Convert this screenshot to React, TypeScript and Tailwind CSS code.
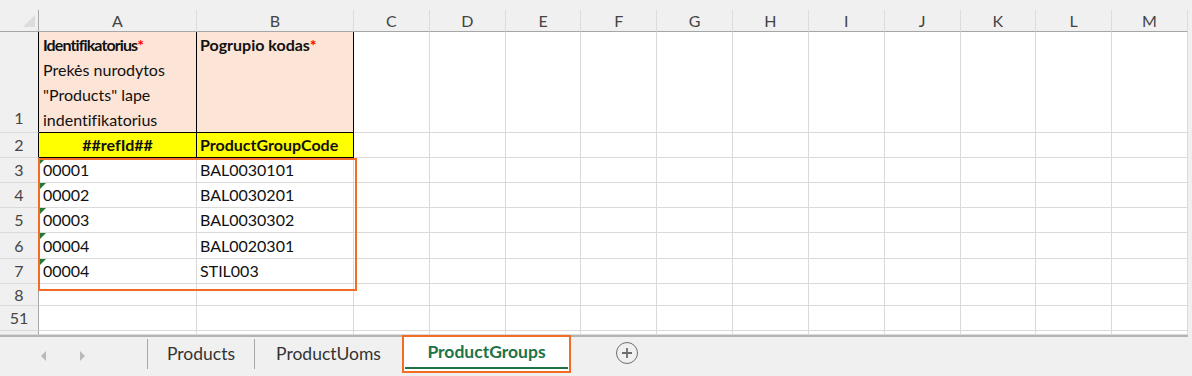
import React from 'react';

const cols = ['A', 'B', 'C', 'D', 'E', 'F', 'G', 'H', 'I', 'J', 'K', 'L', 'M'];
const extraCols = cols.slice(2);

const dataRows = [
  { n: '3', id: '00001', code: 'BAL0030101' },
  { n: '4', id: '00002', code: 'BAL0030201' },
  { n: '5', id: '00003', code: 'BAL0030302' },
  { n: '6', id: '00004', code: 'BAL0020301' },
  { n: '7', id: '00004', code: 'STIL003' },
];

function EmptyCells() {
  return (
    <>
      {extraCols.map((c) => (
        <div key={c} className="bg-white border-r border-b border-[#dadada]" />
      ))}
    </>
  );
}

function RowHead({ n, dark }: { n: string; dark?: boolean }) {
  return (
    <div
      className={`flex items-center justify-center text-[#444] bg-[#f0f0f0] border-r border-b border-b-[#dadada] ${
        dark ? 'border-r-black' : 'border-r-[#a6a6a6]'
      }`}
    >
      {n}
    </div>
  );
}

export default function App() {
  return (
    <div className="w-[1192px] h-[376px] bg-[#f0f0f0] overflow-hidden font-['Lato',sans-serif] text-[16px] leading-none [font-variant-ligatures:none]">
      <div className="h-[10px]" />
      <div className="relative w-[1188px]">
        <div className="grid grid-cols-[39px_158px_157px_repeat(11,75.82px)] grid-rows-[22px_101px_25px_25px_25px_25px_26px_25px_22px_25px_4px]">
          {/* column headers */}
          <div className="relative bg-[#f0f0f0] border-r border-b border-[#a6a6a6]">
            <div className="absolute right-[3px] bottom-[4px] w-0 h-0 border-l-[12px] border-l-transparent border-b-[12px] border-b-[#dcdcdc]" />
          </div>
          {cols.map((c) => (
            <div
              key={c}
              className="flex items-center justify-center text-[#444] bg-[#f0f0f0] border-r border-r-[#dcdcdc] border-b border-b-[#a6a6a6]"
            >
              {c}
            </div>
          ))}

          {/* row 1 */}
          <div className="flex items-end justify-center pb-[6px] text-[#444] bg-[#f0f0f0] border-r border-r-black border-b border-b-[#dadada]">
            1
          </div>
          <div className="bg-[#fce4d6] border-r border-b border-black px-[4px] text-[#111] leading-[25px]">
            <div>
              <span className="font-bold tracking-[-0.9px]">Identifikatorius</span>
              <span className="font-bold text-[#ff0000]">*</span>
            </div>
            <div>Prekės nurodytos</div>
            <div>"Products" lape</div>
            <div>indentifikatorius</div>
          </div>
          <div className="bg-[#fce4d6] border-r border-b border-black px-[3px] text-[#111] leading-[25px]">
            <span className="font-bold">Pogrupio kodas</span>
            <span className="font-bold text-[#ff0000]">*</span>
          </div>
          <EmptyCells />

          {/* row 2 */}
          <RowHead n="2" dark />
          <div className="flex items-center justify-center bg-[#ffff00] border-r border-b border-black font-bold text-[#111]">
            ##refId##
          </div>
          <div className="flex items-center bg-[#ffff00] border-r border-b border-black px-[3px] font-bold text-[#111]">
            ProductGroupCode
          </div>
          <EmptyCells />

          {/* data rows */}
          {dataRows.map((r) => (
            <React.Fragment key={r.n}>
              <RowHead n={r.n} />
              <div className="relative flex items-center bg-white border-r border-b border-[#dadada] px-[4px] text-[#111]">
                <div className="absolute left-0 top-0 w-0 h-0 border-t-[7px] border-t-[#1e7a36] border-r-[7px] border-r-transparent" />
                {r.id}
              </div>
              <div className="flex items-center bg-white border-r border-b border-[#dadada] px-[3px] text-[#111]">
                {r.code}
              </div>
              <EmptyCells />
            </React.Fragment>
          ))}

          {/* rows 8, 51, partial */}
          {['8', '51', ''].map((n) => (
            <React.Fragment key={n || 'x'}>
              <RowHead n={n} />
              <div className="bg-white border-r border-b border-[#dadada]" />
              <div className="bg-white border-r border-b border-[#dadada]" />
              <EmptyCells />
            </React.Fragment>
          ))}
        </div>

        {/* highlight frame */}
        <div className="absolute left-[38px] top-[148px] w-[319px] h-[133px] border-2 border-[#f26c24] pointer-events-none" />
      </div>

      {/* sheet tabs */}
      <div className="w-[1188px] h-[40px] border-t-2 border-[#b4b4b4] bg-[#f0f0f0] flex items-start text-[17.5px]">
        <div className="w-[147px] h-[38px] flex items-center pl-[41px] gap-[34px]">
          <div className="w-0 h-0 border-y-[5px] border-y-transparent border-r-[5px] border-r-[#b9b9b9]" />
          <div className="w-0 h-0 border-y-[5px] border-y-transparent border-l-[5px] border-l-[#b9b9b9]" />
        </div>
        <div className="w-px h-[30px] mt-[2px] bg-[#a8a8a8]" />
        <div className="w-[106px] h-[34px] flex items-center justify-center text-[#333]">Products</div>
        <div className="w-px h-[30px] mt-[2px] bg-[#a8a8a8]" />
        <div className="w-[147px] h-[34px] flex items-center justify-center text-[#333]">ProductUoms</div>
        <div className="-mt-[2px] w-[169px] h-[38px] border-2 border-[#f26c24] bg-white flex flex-col">
          <div className="flex-1 flex items-center justify-center font-bold text-[#217346]">ProductGroups</div>
          <div className="h-[2px] mx-[1px] mb-[2px] bg-[#217346]" />
        </div>
        <div className="ml-[45px] mt-[5px] w-[22px] h-[22px] rounded-full border-[1.5px] border-[#6e6e6e] flex items-center justify-center">
          <svg width="12" height="12" viewBox="0 0 12 12">
            <path d="M6 1v10M1 6h10" stroke="#6e6e6e" strokeWidth="1.8" />
          </svg>
        </div>
      </div>
    </div>
  );
}
